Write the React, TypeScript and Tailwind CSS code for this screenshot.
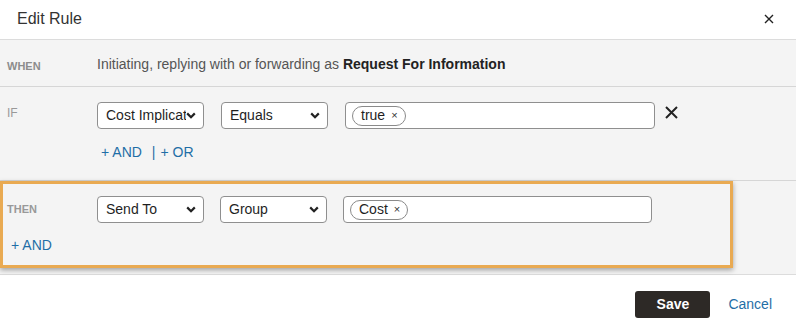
import React from 'react';

const font = { fontFamily: '"Liberation Sans", Arial, sans-serif' };

function Chevron() {
  return (
    <svg width="10" height="7" viewBox="0 0 10 7" className="shrink-0">
      <path d="M1.2 1.4 L5 5.2 L8.8 1.4" fill="none" stroke="#222" strokeWidth="2.2" />
    </svg>
  );
}

function SelectBox({ value, width }: { value: string; width: string }) {
  return (
    <div className={`${width} h-[27px] flex items-center justify-between pl-[8px] pr-[7px] bg-white border border-[#8f8f8f] rounded-[4px] text-[14px] text-[#1f1f1f]`}>
      <span className="whitespace-nowrap overflow-hidden">{value}</span>
      <Chevron />
    </div>
  );
}

function TagInput({ tag, width }: { tag: string; width: string }) {
  return (
    <div className={`${width} h-[27px] flex items-center pl-[6px] bg-white border border-[#8f8f8f] rounded-[4px]`}>
      <span className="h-[20px] flex items-center gap-[6px] pl-[8px] pr-[7px] border border-[#8a8a8a] rounded-full text-[14px] text-[#1f1f1f]">
        {tag}
        <span className="text-[11px] text-[#333] leading-none">×</span>
      </span>
    </div>
  );
}

export default function App() {
  return (
    <div style={font} className="w-[796px] h-[329px] bg-white overflow-hidden">
      <div className="h-[40px] flex items-center justify-between pl-[17px] pr-[22px] border-b border-[#dcdcdc]">
        <span className="text-[16px] text-[#333] -mt-[2px]">Edit Rule</span>
        <svg width="10" height="10" viewBox="0 0 10 10" className="-mt-[2px]">
          <path d="M1 1 L9 9 M9 1 L1 9" stroke="#222" strokeWidth="1.4" />
        </svg>
      </div>

      <div className="h-[47px] flex items-center bg-[#f4f4f4] border-b border-[#d6d6d6]">
        <span className="w-[97px] pl-[7px] pt-[6px] text-[11px] font-bold text-[#8c8c8c]">WHEN</span>
        <span className="text-[14px] text-[#555] pt-[2px]">
          Initiating, replying with or forwarding as <b className="text-[#222]">Request For Information</b>
        </span>
      </div>

      <div className="h-[94px] bg-[#f4f4f4] border-b border-[#d6d6d6] pt-[15px]">
        <div className="flex items-start">
          <span className="w-[97px] pl-[7px] pt-[2px] text-[12px] text-[#999]">IF</span>
          <div className="flex items-center gap-[17px]">
            <SelectBox value="Cost Implicat" width="w-[107px]" />
            <SelectBox value="Equals" width="w-[107px]" />
            <TagInput tag="true" width="w-[310px]" />
          </div>
          <svg width="13" height="13" viewBox="0 0 13 13" className="ml-[10px] mt-[4px]">
            <path d="M1 1 L12 12 M12 1 L1 12" stroke="#222" strokeWidth="2" />
          </svg>
        </div>
        <div className="pl-[101px] mt-[13px] text-[14px] text-[#1f6ea6] flex">
          <span>+ AND</span>
          <span className="ml-[10px]">|</span>
          <span className="ml-[5px]">+ OR</span>
        </div>
      </div>

      <div className="h-[94px] bg-[#f4f4f4] border-b border-[#dcdcdc]">
        <div className="w-[733px] h-[87px] border-[3px] border-[#e9aa52] shadow-[0_2px_5px_rgba(0,0,0,0.35)] pt-[12px]">
          <div className="flex items-start">
            <span className="w-[94px] pl-[4px] pt-[5px] text-[11px] font-bold text-[#999]">THEN</span>
            <div className="flex items-center gap-[16px]">
              <SelectBox value="Send To" width="w-[107px]" />
              <SelectBox value="Group" width="w-[107px]" />
              <TagInput tag="Cost" width="w-[309px]" />
            </div>
          </div>
          <div className="pl-[8px] mt-[12px] text-[14px] text-[#1f6ea6]">+ AND</div>
        </div>
      </div>

      <div className="h-[53px] flex items-center justify-end pr-[24px] pt-[6px] gap-[18px]">
        <button className="w-[75px] h-[27px] rounded-[3px] bg-[#2d2926] text-white text-[14px] font-bold">Save</button>
        <span className="text-[14px] text-[#1f6ea6]">Cancel</span>
      </div>
    </div>
  );
}
